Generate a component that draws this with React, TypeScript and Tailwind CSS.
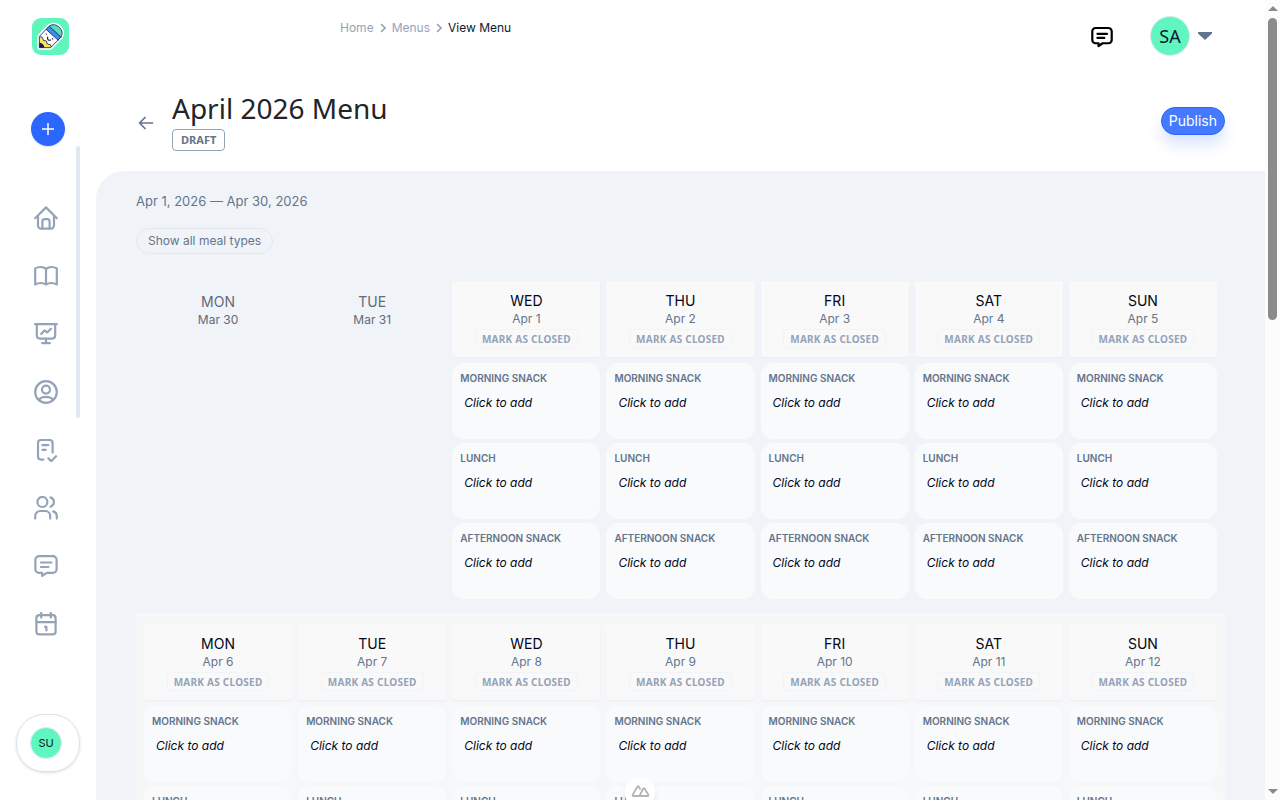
import React from "react";

const MEALS = ["MORNING SNACK", "LUNCH", "AFTERNOON SNACK"];

type Day = { name: string; date: string; outside?: boolean };

const WEEKS: Day[][] = [
  [
    { name: "MON", date: "Mar 30", outside: true },
    { name: "TUE", date: "Mar 31", outside: true },
    { name: "WED", date: "Apr 1" },
    { name: "THU", date: "Apr 2" },
    { name: "FRI", date: "Apr 3" },
    { name: "SAT", date: "Apr 4" },
    { name: "SUN", date: "Apr 5" },
  ],
  [
    { name: "MON", date: "Apr 6" },
    { name: "TUE", date: "Apr 7" },
    { name: "WED", date: "Apr 8" },
    { name: "THU", date: "Apr 9" },
    { name: "FRI", date: "Apr 10" },
    { name: "SAT", date: "Apr 11" },
    { name: "SUN", date: "Apr 12" },
  ],
];

const messagePath = (
  <>
    <path d="M5 2.200h14a3.600 3.600 0 0 1 3.600 3.600v9.400a3.600 3.600 0 0 1-3.600 3.600h-6.200L8.200 21.800V18.800H5a3.600 3.600 0 0 1-3.600-3.600V5.800A3.600 3.600 0 0 1 5 2.200Z" />
    <path d="M7 8.500h10.500M7 13h7.500" />
  </>
);

const NAV: { label: string; icon: React.ReactNode }[] = [
  {
    label: "Home",
    icon: (
      <>
        <path d="M1.200 12.200 12 1.400l10.800 10.800" />
        <path d="M4 10v9.600A3 3 0 0 0 7 22.600h10a3 3 0 0 0 3-3V10" />
        <path d="M8.400 22.400v-6.800a2.400 2.400 0 0 1 2.400-2.400h2.400a2.400 2.400 0 0 1 2.400 2.400v6.800" />
      </>
    ),
  },
  {
    label: "Menus",
    icon: (
      <>
        <path d="M12 4.800C10.500 3.500 8.500 3 6.500 3 4.600 3 2.800 3.400 1.200 4.400v16c3.400-1.700 7.600-1.700 10.800 0 3.200-1.700 7.400-1.700 10.800 0v-16C21.200 3.400 19.400 3 17.500 3c-2 0-4 .5-5.500 1.800Z" />
        <path d="M12 4.800v15.600" />
      </>
    ),
  },
  {
    label: "Reports",
    icon: (
      <>
        <path d="M1.200 2.200h21.600M2.800 2.200v11.400a3 3 0 0 0 3 3h12.400a3 3 0 0 0 3-3V2.200M12 16.800V21M8.200 21.200h7.600" />
        <path d="m7.200 12 3.200-3.600 2.800 2L17 6.800" />
      </>
    ),
  },
  {
    label: "Profile",
    icon: (
      <>
        <circle cx="12" cy="12" r="10.800" />
        <circle cx="12" cy="9.600" r="4" />
        <path d="M5.200 19.800c1-2 3.600-3 6.800-3s5.800 1 6.800 3" />
      </>
    ),
  },
  {
    label: "Forms",
    icon: (
      <>
        <path d="M9.400 21.600H7a3 3 0 0 1-3-3V5a3 3 0 0 1 3-3h8.600a3 3 0 0 1 3 3v9.400" />
        <path d="M8.400 7.200h5.800M8.400 11.800h3.400M14.400 20.400l2.800 2.800 4.800-5" />
      </>
    ),
  },
  {
    label: "People",
    icon: (
      <>
        <circle cx="8.400" cy="6" r="5" />
        <path d="M1.200 22.600V20a5 5 0 0 1 5-5h5a5 5 0 0 1 5 5v2.600M16.600 1.400a5 5 0 0 1 0 9.400M19.200 15.400a5 5 0 0 1 3.600 4.600v2.600" />
      </>
    ),
  },
  { label: "Messages", icon: messagePath },
  {
    label: "Calendar",
    icon: (
      <>
        <rect x="2.400" y="3.200" width="19.200" height="19.200" rx="3" />
        <path d="M7.200 1v4.600M16.800 1v4.600M2.400 10.200h19.200M11 14.800h1.400v3.600" />
      </>
    ),
  },
];

function Logo() {
  return (
    <svg viewBox="0 0 111 111" className="size-[37px]" aria-hidden="true">
      <rect width="111" height="111" rx="27" fill="#5ff5bd" />
      <path
        d="M22 89V55L50 26C60 16 74 20 82 28s12 20 4 30L56 89Z"
        fill="#fff"
        stroke="#fff"
        strokeWidth="12"
        strokeLinejoin="round"
      />
      <path d="M50 26C60 16 74 20 82 28s12 20 4 30Z" fill="#54dfb6" />
      <path d="m42 34 9-10 37 34-9 9Z" fill="#3d8dea" />
      <path d="M22 89V56l8 2 4 9 9 2 3 9 10 2 2 7-3 2Z" fill="#f7e94c" />
      <path d="M22 89V74c8 0 15 7 15 15Z" fill="#17175c" />
      <path
        d="M22 89V55L50 26C60 16 74 20 82 28s12 20 4 30L56 89ZM42 34l37 33M51 24l37 34M24 56l7 2 3 9 9 2 3 9 9 2 3 7"
        fill="none"
        stroke="#17175c"
        strokeWidth="2.500"
        strokeLinejoin="round"
      />
      <path
        d="M47 57c-2 8 2 11 9 9M43 48v1M62 62v1"
        fill="none"
        stroke="#17175c"
        strokeWidth="3.500"
        strokeLinecap="round"
      />
    </svg>
  );
}

function Sidebar() {
  return (
    <aside className="flex w-24 shrink-0 flex-col pt-[18px] pb-7">
      <a href="#home" aria-label="Dashboard" className="ml-8 w-fit">
        <Logo />
      </a>
      <button
        type="button"
        aria-label="Create"
        className="mt-[57px] ml-[31px] flex size-[34px] items-center justify-center rounded-full bg-[#2b66ff] text-white shadow-sm"
      >
        <svg viewBox="0 0 12 12" className="size-3" fill="none" stroke="currentColor" strokeWidth="1.500">
          <path d="M6 0v12M0 6h12" />
        </svg>
      </button>
      <div className="flex justify-between pr-4 pl-[34px]">
        <nav aria-label="Main" className="flex flex-col gap-[34px] pt-[60px]">
          {NAV.map((item) => (
            <a key={item.label} href={"#" + item.label.toLowerCase()} aria-label={item.label} className="text-[#94a3b8]">
              <svg
                viewBox="0 0 24 24"
                className="size-6"
                fill="none"
                stroke="currentColor"
                strokeWidth="2.200"
                strokeLinecap="round"
                strokeLinejoin="round"
              >
                {item.icon}
              </svg>
            </a>
          ))}
        </nav>
        <div className="h-[272px] w-1 rounded-full bg-[#e1e8f0]" />
      </div>
      <button
        type="button"
        aria-label="Account SU"
        className="mt-auto ml-4 flex h-[58px] w-16 items-center rounded-[28px] border border-[#dbe1ee] pl-[13px] shadow-sm"
      >
        <span className="flex size-8 items-center justify-center rounded-full border border-slate-200 bg-[#5ff7bf] text-[11px] text-slate-900">
          SU
        </span>
      </button>
    </aside>
  );
}

function Chevron() {
  return (
    <svg viewBox="0 0 6 10" className="h-[10px] w-[6px] text-[#94a3b8]" fill="none" stroke="currentColor" strokeWidth="1.600">
      <path d="m1 1 4 4-4 4" />
    </svg>
  );
}

function Header() {
  return (
    <header className="flex items-start justify-between pr-[53px] pl-[244px]">
      <nav aria-label="Breadcrumb" className="flex items-center gap-[6px] pt-5 text-[12px] leading-4 text-[#94a3b8]">
        <a href="#home">Home</a>
        <Chevron />
        <a href="#menus">Menus</a>
        <Chevron />
        <span className="text-slate-900">View Menu</span>
      </nav>
      <div className="flex items-center pt-4">
        <button type="button" aria-label="Messages" className="mt-[2px] mr-[37px] text-black">
          <svg
            viewBox="0 0 24 24"
            className="size-[22px]"
            fill="none"
            stroke="currentColor"
            strokeWidth="2.400"
            strokeLinecap="round"
            strokeLinejoin="round"
          >
            {messagePath}
          </svg>
        </button>
        <button type="button" aria-label="User menu SA" className="flex items-center gap-2">
          <span className="flex size-10 items-center justify-center rounded-full border border-slate-200 bg-[#5ff7bf] font-['Noto_Sans',sans-serif] text-[18px] text-slate-900">
            SA
          </span>
          <svg viewBox="0 0 14 8" className="h-2 w-[14px]" fill="#64748b">
            <path d="M0 0h14v1.500L7 8 0 1.500Z" />
          </svg>
        </button>
      </div>
    </header>
  );
}

function DayColumn({ day }: { day: Day }) {
  if (day.outside) {
    return (
      <div className="pt-[11px] text-center text-[#64697a]">
        <div className="text-[14px] leading-5">{day.name}</div>
        <div className="text-[12px] leading-4">{day.date}</div>
      </div>
    );
  }
  return (
    <div>
      <div className="mb-[6px] flex h-[76px] flex-col items-center rounded-[3px] bg-[#f9f9fa] pt-[10px] shadow-[0_1px_1px_rgba(226,236,247,0.500)]">
        <div className="text-[14px] leading-5 text-slate-950">{day.name}</div>
        <div className="text-[12px] leading-4 text-[#64748b]">{day.date}</div>
        <button
          type="button"
          className="mt-[2px] h-[19px] rounded-[4px] border border-[#f1f4f9] px-[6px] font-['Noto_Sans',sans-serif] text-[10px] leading-4 font-bold tracking-wide text-[#94a3b8]"
        >
          MARK AS CLOSED
        </button>
      </div>
      <div className="flex flex-col gap-1">
        {MEALS.map((meal) => (
          <section key={meal} className="h-[76px] rounded-[12px] bg-[#f8fafc] px-2 pt-[7px]">
            <h3 className="text-[10px] leading-4 font-semibold whitespace-nowrap text-[#64748b]">{meal}</h3>
            <button type="button" className="mt-[9px] ml-1 block text-[12px] leading-4 text-slate-950 italic">
              Click to add
            </button>
          </section>
        ))}
      </div>
    </div>
  );
}

function PageScrollbar() {
  return (
    <div aria-hidden="true" className="flex w-[15px] shrink-0 flex-col items-center bg-[#fcfcfc] py-[6px]">
      <svg viewBox="0 0 10 5" className="h-[5px] w-[10px]" fill="#8b8b8b">
        <path d="M0 5 5 0l5 5Z" />
      </svg>
      <div className="mt-[7px] h-[302px] w-[9px] rounded-full bg-[#8b8b8b]" />
      <svg viewBox="0 0 10 5" className="mt-auto h-[5px] w-[10px]" fill="#8b8b8b">
        <path d="M0 0h10L5 5Z" />
      </svg>
    </div>
  );
}

export default function App() {
  return (
    <div className="relative flex h-screen overflow-hidden bg-white font-[Inter,sans-serif] antialiased">
      <Sidebar />
      <main className="flex min-w-0 flex-1 flex-col">
        <Header />
        <div className="flex items-center justify-between pt-[34px] pr-10 pb-5 pl-[42px]">
          <div className="flex items-center gap-[18px]">
            <a href="#menus" aria-label="Back" className="mt-1 text-[#64748b]">
              <svg
                viewBox="0 0 16 14"
                className="h-[14px] w-4"
                fill="none"
                stroke="currentColor"
                strokeWidth="1.700"
                strokeLinecap="round"
                strokeLinejoin="round"
              >
                <path d="M14.500 7H2M7 1.500 1.500 7 7 12.500" />
              </svg>
            </a>
            <div className="font-['Noto_Sans',sans-serif]">
              <h1 className="pb-[2px] text-[28px] leading-[37px] text-[#212529]">April 2026 Menu</h1>
              <span className="block w-fit rounded-[4px] border border-[#94a3b8] px-2 text-[11px] leading-5 font-bold text-[#64748b]">
                DRAFT
              </span>
            </div>
          </div>
          <button
            type="button"
            className="h-7 rounded-full border border-[#2b66ff] bg-[#457aff] px-[7px] text-[14px] leading-5 text-white shadow-[0_10px_14px_rgba(43,102,255,0.160)]"
          >
            Publish
          </button>
        </div>
        <div className="min-h-0 flex-1 overflow-hidden rounded-tl-[28px] bg-[#f0f4f9] px-10 pt-5">
          <p className="text-[13px] leading-5 text-[#64748b]">Apr 1, 2026 — Apr 30, 2026</p>
          <button
            type="button"
            className="mt-[17px] mb-4 block h-[26px] rounded-full border border-[#e2e8f0] px-[11px] text-[12px] leading-4 text-[#64748b]"
          >
            Show all meal types
          </button>
          <div className="flex flex-col gap-[6px]">
            {WEEKS.map((week, index) => (
              <div
                key={week[0].date}
                className={
                  index % 2 === 1
                    ? "grid grid-cols-7 gap-[6px] bg-[#f5f7f9] px-2 pt-[11px] pb-2"
                    : "grid grid-cols-7 gap-[6px] px-2 pt-[11px] pb-2"
                }
              >
                {week.map((day) => (
                  <DayColumn key={day.date} day={day} />
                ))}
              </div>
            ))}
          </div>
        </div>
      </main>
      <PageScrollbar />
      <button
        type="button"
        aria-label="Developer tools"
        className="absolute -bottom-2 left-1/2 flex size-[31px] -translate-x-1/2 items-center justify-center rounded-full bg-white pb-[3px] shadow-md"
      >
        <svg viewBox="0 0 18 12" className="h-3 w-[18px]" fill="none" stroke="#b5b5b5" strokeWidth="1.800" strokeLinejoin="round">
          <path d="M10.500 11H1.500a.6.6 0 0 1-.5-1L6 1.500q.6-.8 1.200 0L9 4.600M8 11h8.500a.6.6 0 0 0 .5-1l-4-6.500q-.6-.8-1.200 0Z" />
        </svg>
      </button>
    </div>
  );
}
